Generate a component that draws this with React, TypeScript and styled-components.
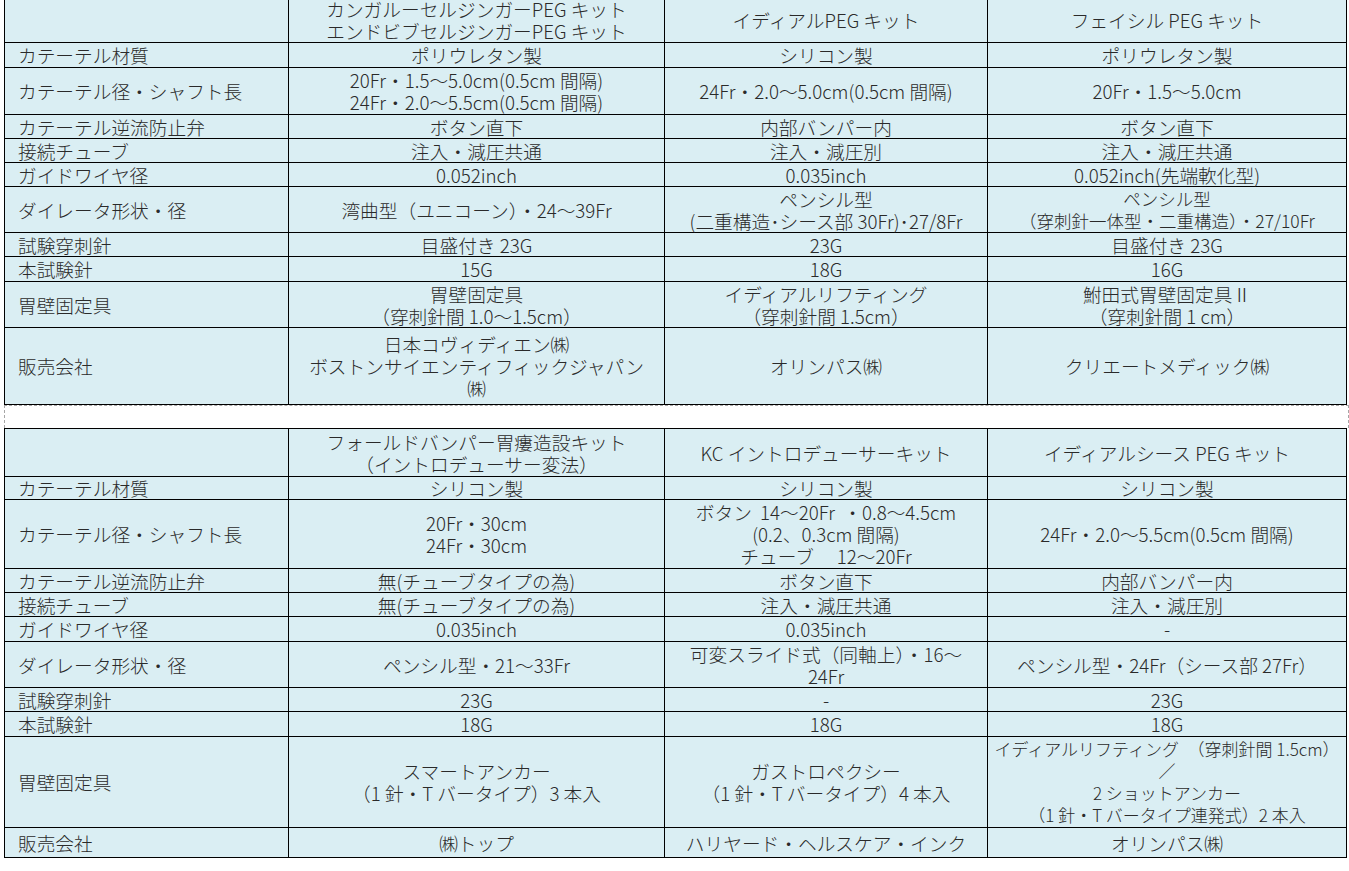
import React from "react";
import styled, { createGlobalStyle } from "styled-components";

const Global = createGlobalStyle`
  html, body { margin: 0; padding: 0; background: #ffffff; }
  body { font-family: "Noto Sans CJK JP", "Noto Sans", sans-serif; font-weight: 300; color: #2a2a2a; }
`;

const Page = styled.div`
  display: flex;
  flex-direction: column;
  align-items: flex-start;
  padding-left: 4px;
  margin-top: -4px;
`;

const Table = styled.table`
  border-collapse: separate;
  border-spacing: 0;
  table-layout: fixed;
  width: 1342px;
  border-top: 1px solid #000;
  border-left: 1px solid #000;
  background: #daeef3;
  font-size: 18.7px;
  line-height: 22px;
`;

const Row = styled.tr<{ $h: number }>`
  height: ${(p) => p.$h}px;
`;

const Cell = styled.td<{ $size?: number }>`
  border-right: 1px solid #000;
  border-bottom: 1px solid #000;
  padding: 0;
  text-align: center;
  vertical-align: middle;
  white-space: nowrap;
  overflow: visible;
  ${(p) => (p.$size ? `font-size: ${p.$size}px;` : "")}
`;

const LabelCell = styled(Cell)`
  text-align: left;
  padding-left: 13px;
`;

const Spacer = styled.div`
  width: 1343px;
  height: 22px;
  border: 1px dashed #a6a6a6;
  border-bottom: none;
`;

type Val = string | { t: string; size?: number };
type RowData = { label: string; h: number; vals: Val[] };
type TableData = { headH: number; heads: string[]; rows: RowData[] };

const table1: TableData = {
  headH: 46,
  heads: [
    "カンガルーセルジンガーPEG キット\nエンドビブセルジンガーPEG キット",
    "イディアルPEG キット",
    "フェイシル PEG キット",
  ],
  rows: [
    { label: "カテーテル材質", h: 25, vals: ["ポリウレタン製", "シリコン製", "ポリウレタン製"] },
    {
      label: "カテーテル径・シャフト長",
      h: 47,
      vals: [
        "20Fr・1.5～5.0cm(0.5cm 間隔)\n24Fr・2.0～5.5cm(0.5cm 間隔)",
        "24Fr・2.0～5.0cm(0.5cm 間隔)",
        "20Fr・1.5～5.0cm",
      ],
    },
    { label: "カテーテル逆流防止弁", h: 24, vals: ["ボタン直下", "内部バンパー内", "ボタン直下"] },
    { label: "接続チューブ", h: 24, vals: ["注入・減圧共通", "注入・減圧別", "注入・減圧共通"] },
    { label: "ガイドワイヤ径", h: 24, vals: ["0.052inch", "0.035inch", "0.052inch(先端軟化型)"] },
    {
      label: "ダイレータ形状・径",
      h: 46,
      vals: [
        "湾曲型（ユニコーン）・24～39Fr",
        "ペンシル型\n(二重構造･シース部 30Fr)･27/8Fr",
        { t: "ペンシル型\n（穿刺針一体型・二重構造）・27/10Fr", size: 17.5 },
      ],
    },
    { label: "試験穿刺針", h: 24, vals: ["目盛付き 23G", "23G", "目盛付き 23G"] },
    { label: "本試験針", h: 25, vals: ["15G", "18G", "16G"] },
    {
      label: "胃壁固定具",
      h: 46,
      vals: [
        "胃壁固定具\n（穿刺針間 1.0～1.5cm）",
        "イディアルリフティング\n（穿刺針間 1.5cm）",
        "鮒田式胃壁固定具Ⅱ\n（穿刺針間 1 cm）",
      ],
    },
    {
      label: "販売会社",
      h: 77,
      vals: [
        "日本コヴィディエン㈱\nボストンサイエンティフィックジャパン\n㈱",
        "オリンパス㈱",
        "クリエートメディック㈱",
      ],
    },
  ],
};

const table2: TableData = {
  headH: 48,
  heads: [
    "フォールドバンパー胃瘻造設キット\n（イントロデューサー変法）",
    "KC イントロデューサーキット",
    "イディアルシース PEG キット",
  ],
  rows: [
    { label: "カテーテル材質", h: 23, vals: ["シリコン製", "シリコン製", "シリコン製"] },
    {
      label: "カテーテル径・シャフト長",
      h: 69,
      vals: [
        "20Fr・30cm\n24Fr・30cm",
        "ボタン\u00a0\u00a014～20Fr\u00a0\u00a0・0.8～4.5cm\n(0.2、0.3cm 間隔)\nチューブ\u3000 12～20Fr",
        "24Fr・2.0～5.5cm(0.5cm 間隔)",
      ],
    },
    { label: "カテーテル逆流防止弁", h: 24, vals: ["無(チューブタイプの為)", "ボタン直下", "内部バンパー内"] },
    { label: "接続チューブ", h: 24, vals: ["無(チューブタイプの為)", "注入・減圧共通", "注入・減圧別"] },
    { label: "ガイドワイヤ径", h: 25, vals: ["0.035inch", "0.035inch", "-"] },
    {
      label: "ダイレータ形状・径",
      h: 46,
      vals: ["ペンシル型・21～33Fr", "可変スライド式（同軸上）・16～\n24Fr", "ペンシル型・24Fr（シース部 27Fr）"],
    },
    { label: "試験穿刺針", h: 24, vals: ["23G", "-", "23G"] },
    { label: "本試験針", h: 25, vals: ["18G", "18G", "18G"] },
    {
      label: "胃壁固定具",
      h: 91,
      vals: [
        "スマートアンカー\n（1 針・T バータイプ）3 本入",
        "ガストロペクシー\n（1 針・T バータイプ）4 本入",
        { t: "イディアルリフティング\u3000（穿刺針間 1.5cm）\n／\n2 ショットアンカー\n（1 針・T バータイプ連発式）2 本入", size: 17 },
      ],
    },
    { label: "販売会社", h: 30, vals: ["㈱トップ", "ハリヤード・ヘルスケア・インク", "オリンパス㈱"] },
  ],
};

const Lines: React.FC<{ text: string }> = ({ text }) => (
  <>
    {text.split("\n").map((line, i) => (
      <React.Fragment key={i}>
        {i > 0 && <br />}
        {line}
      </React.Fragment>
    ))}
  </>
);

const SpecTable: React.FC<{ data: TableData }> = ({ data }) => (
  <Table>
    <colgroup>
      <col style={{ width: 284 }} />
      <col style={{ width: 376 }} />
      <col style={{ width: 323 }} />
      <col style={{ width: 359 }} />
    </colgroup>
    <tbody>
      <Row $h={data.headH}>
        <LabelCell />
        {data.heads.map((h, i) => (
          <Cell key={i}>
            <Lines text={h} />
          </Cell>
        ))}
      </Row>
      {data.rows.map((r, i) => (
        <Row key={i} $h={r.h}>
          <LabelCell>{r.label}</LabelCell>
          {r.vals.map((v, j) => {
            const t = typeof v === "string" ? v : v.t;
            const size = typeof v === "string" ? undefined : v.size;
            return (
              <Cell key={j} $size={size}>
                <Lines text={t} />
              </Cell>
            );
          })}
        </Row>
      ))}
    </tbody>
  </Table>
);

export default function App() {
  return (
    <>
      <Global />
      <Page>
        <SpecTable data={table1} />
        <Spacer />
        <SpecTable data={table2} />
      </Page>
    </>
  );
}
